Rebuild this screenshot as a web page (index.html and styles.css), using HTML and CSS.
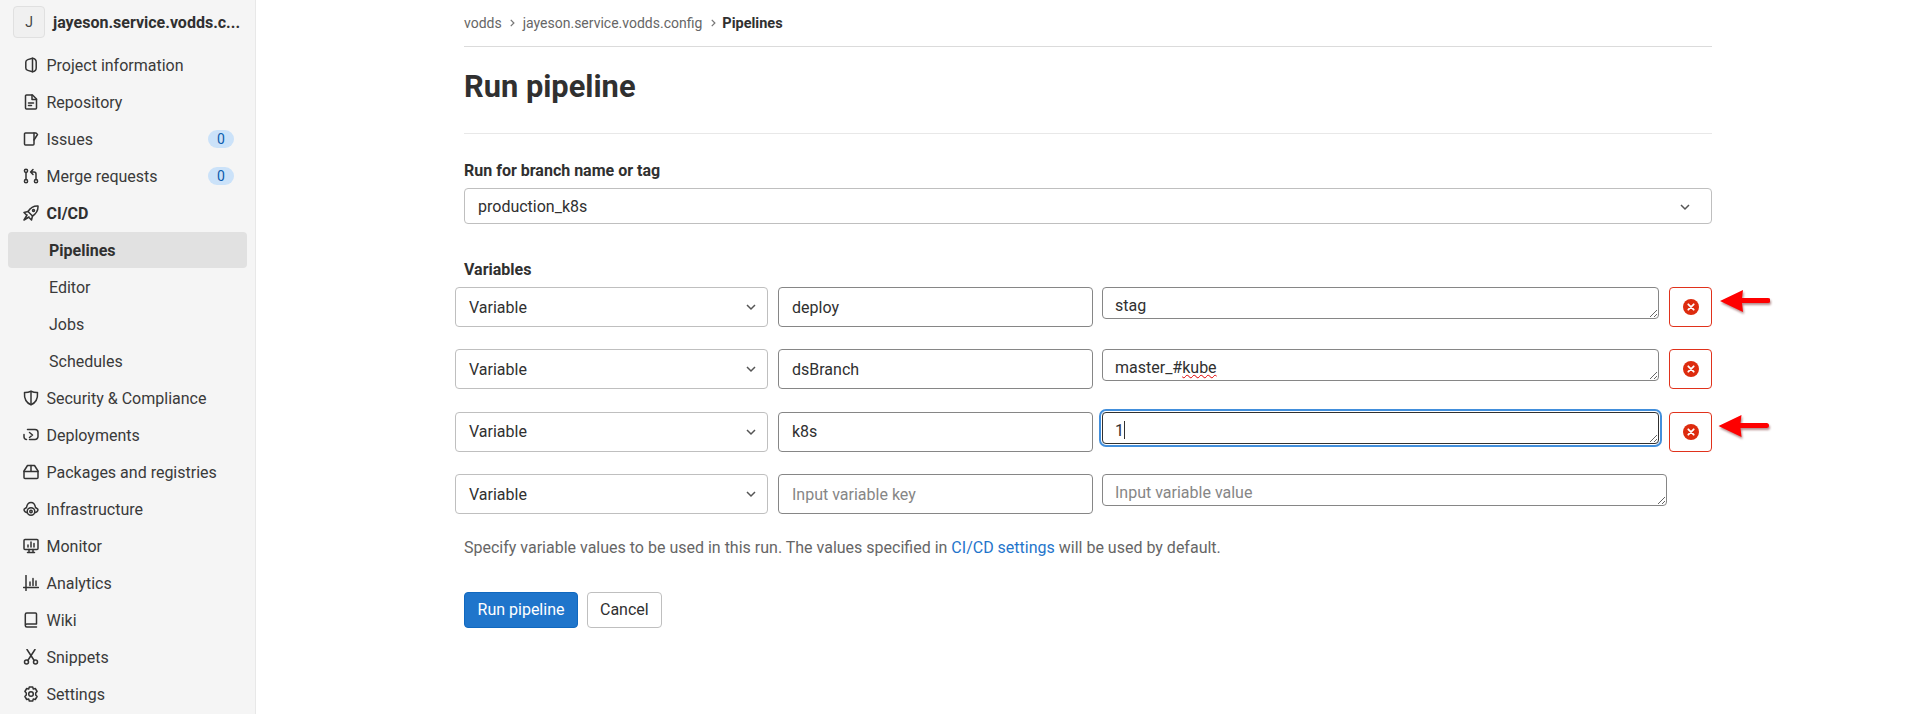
FILE: index.html
```html
<!DOCTYPE html>
<html lang="en">
<head>
  <meta charset="UTF-8" />
  <meta name="viewport" content="width=device-width, initial-scale=1.0" />
  <title>Run pipeline</title>
  <link rel="stylesheet" href="styles.css">
</head>
<body>
  <aside class="sidebar">
    <div class="context">
      <span class="avatar">J</span>
      <span class="context-name">jayeson.service.vodds.c...</span>
    </div>
    <ul class="nav">
      <li class="nav-item">
        <svg class="icon" viewBox="0 0 16 16"><path d="M9.5 1.2 4.8 2.6C3.4 3 2.800 3.800 2.800 5v6c0 1.200.6 2 2 2.400l4.700 1.400c2.200-.3 3.700-1.600 3.700-3.800V5c0-2.200-1.500-3.500-3.700-3.800z"/><path d="M9.500 1.200v13.600"/></svg>
        Project information
      </li>
      <li class="nav-item">
        <svg class="icon" viewBox="0 0 16 16"><path d="M9.500 1H3.500a1 1 0 0 0-1 1v12a1 1 0 0 0 1 1h9a1 1 0 0 0 1-1V5z"/><path d="M9 1v4.500h4.500M5.500 9h5M5.500 11.500h3"/></svg>
        Repository
      </li>
      <li class="nav-item">
        <svg class="icon" viewBox="0 0 16 16"><path d="M11 2H2.500a1 1 0 0 0-1 1v10a1 1 0 0 0 1 1H10a1 1 0 0 0 1-1V9l3.500-5.500L13 2z"/><path d="M11 2v7"/></svg>
        Issues
        <span class="badge">0</span>
      </li>
      <li class="nav-item">
        <svg class="icon" viewBox="0 0 16 16"><circle cx="3" cy="2.800" r="1.600"/><circle cx="3" cy="13.200" r="1.600"/><circle cx="13" cy="13.200" r="1.600"/><path d="M3 4.500v7M13 11.500V6a2 2 0 0 0-2-2H8M10 1.500 7.600 4 10 6.500"/></svg>
        Merge requests
        <span class="badge">0</span>
      </li>
      <li class="nav-item nav-open">
        <svg class="icon" viewBox="0 0 16 16"><path d="M15 1c-4.400-.3-7.400 1.500-10 5.500l4.500 4.500c4-2.600 5.800-5.600 5.500-10z"/><path d="M5 6.500 1 7.500l2 2M9.500 11l-1 4-2-2M4 10 1 15l5-3"/><circle cx="10.500" cy="5.500" r="1"/></svg>
        CI/CD
      </li>
      <li class="nav-sub nav-active">Pipelines</li>
      <li class="nav-sub">Editor</li>
      <li class="nav-sub">Jobs</li>
      <li class="nav-sub">Schedules</li>
      <li class="nav-item">
        <svg class="icon" viewBox="0 0 16 16"><path d="M8 1.200c2.200 1 4.300 1.400 6.500 1.300.4 5.500-1.400 10.200-6.500 12.300C2.900 12.700 1.100 8 1.500 2.500 3.700 2.600 5.800 2.200 8 1.200z"/><path d="M8 1.500v13"/></svg>
        Security &amp; Compliance
      </li>
      <li class="nav-item">
        <svg class="icon" viewBox="0 0 16 16"><path d="M4.500 2.500H12A3 3 0 0 1 15 5.500v4A3 3 0 0 1 12 12.500H6.500M3.500 12.500a2.500 2.500 0 0 1-2.500-2.500V7.500"/><path d="m6.500 5.500 3 2.500-3 2.500"/></svg>
        Deployments
      </li>
      <li class="nav-item">
        <svg class="icon" viewBox="0 0 16 16"><path d="M4.500 1.500h7L15 7v6.500a1 1 0 0 1-1 1H2a1 1 0 0 1-1-1V7z"/><path d="M1 7.500h14M8 1.500v6"/></svg>
        Packages and registries
      </li>
      <li class="nav-item">
        <svg class="icon" viewBox="0 0 16 16"><path d="M3.500 11.500C1.500 11 .5 9 1.500 7.800L3.500 6.500C4 3.500 6 1.500 8 1.500s4 2 4.500 5l2 1.300c1 1.200 0 3.200-2 3.700"/><circle cx="8" cy="10.500" r="3.800"/><circle cx="8" cy="10.500" r="1.200"/></svg>
        Infrastructure
      </li>
      <li class="nav-item">
        <svg class="icon" viewBox="0 0 16 16"><rect x="1" y="1.500" width="14" height="10" rx="1"/><path d="M4.500 14.500h7M6 11.500v3M10 11.500v3M5 9V7M8 9V4M11 9V5.500"/></svg>
        Monitor
      </li>
      <li class="nav-item">
        <svg class="icon" viewBox="0 0 16 16"><path d="M3 .5v15M.5 12.500h15M7 10.500V7M10 10.500V3.500M13 10.500V6"/></svg>
        Analytics
      </li>
      <li class="nav-item">
        <svg class="icon" viewBox="0 0 16 16"><path d="M3.800 1h8.700a1 1 0 0 1 1 1v10H3.800a1.500 1.500 0 0 0 0 3h9.700M2.300 13.500V2.500A1.500 1.500 0 0 1 3.800 1"/></svg>
        Wiki
      </li>
      <li class="nav-item">
        <svg class="icon" viewBox="0 0 16 16"><circle cx="3.500" cy="13" r="2"/><circle cx="12.500" cy="13" r="2"/><path d="M4.800 11.500 12 .5M11.200 11.500 4 .5"/></svg>
        Snippets
      </li>
      <li class="nav-item">
        <svg class="icon" viewBox="0 0 16 16"><path d="M6.300 1h3.400l.6 2 2-.5 1.800 3-1.400 1.500v2l1.400 1.500-1.800 3-2-.5-.6 2H6.300l-.6-2-2 .5-1.800-3L3.300 9V7L1.900 5.500l1.800-3 2 .5z"/><circle cx="8" cy="8" r="2.300"/></svg>
        Settings
      </li>
    </ul>
  </aside>

  <main class="content">
    <nav class="breadcrumbs">
      <span>vodds</span>
      <svg class="crumb-sep" viewBox="0 0 8 8"><path d="m3 1.500 2.500 2.500L3 6.500"/></svg>
      <span>jayeson.service.vodds.config</span>
      <svg class="crumb-sep" viewBox="0 0 8 8"><path d="m3 1.500 2.500 2.500L3 6.500"/></svg>
      <strong>Pipelines</strong>
    </nav>

    <h1 class="page-title">Run pipeline</h1>

    <form class="pipeline-form">
      <div class="field-label">Run for branch name or tag</div>
      <div class="select branch-select">
        production_k8s
        <svg class="chevron" viewBox="0 0 16 16"><path d="m4 6 4 4 4-4"/></svg>
      </div>

      <div class="field-label variables-label">Variables</div>

      <div class="var-row">
        <div class="select var-type">Variable <svg class="chevron" viewBox="0 0 16 16"><path d="m4 6 4 4 4-4"/></svg></div>
        <input class="var-key" type="text" value="deploy">
        <div class="var-value">stag</div>
        <button class="var-remove" type="button"><svg viewBox="0 0 16 16"><circle cx="8" cy="8" r="8"/><path d="m5.300 5.300 5.400 5.400m0-5.400-5.400 5.400"/></svg></button>
        <svg class="arrow" viewBox="0 0 50 22"><path d="M0 11 23 0l-1 8h26a2.500 2.500 0 0 1 0 5H22l1 9z"/></svg>
      </div>

      <div class="var-row">
        <div class="select var-type">Variable <svg class="chevron" viewBox="0 0 16 16"><path d="m4 6 4 4 4-4"/></svg></div>
        <input class="var-key" type="text" value="dsBranch">
        <div class="var-value">master_#<span class="misspelled">kube</span></div>
        <button class="var-remove" type="button"><svg viewBox="0 0 16 16"><circle cx="8" cy="8" r="8"/><path d="m5.300 5.300 5.400 5.400m0-5.400-5.400 5.400"/></svg></button>
      </div>

      <div class="var-row">
        <div class="select var-type">Variable <svg class="chevron" viewBox="0 0 16 16"><path d="m4 6 4 4 4-4"/></svg></div>
        <input class="var-key" type="text" value="k8s">
        <div class="var-value var-focus">1<span class="caret"></span></div>
        <button class="var-remove" type="button"><svg viewBox="0 0 16 16"><circle cx="8" cy="8" r="8"/><path d="m5.300 5.300 5.400 5.400m0-5.400-5.400 5.400"/></svg></button>
        <svg class="arrow arrow-long" viewBox="0 0 50 22"><path d="M0 11 23 0l-1 8h26a2.500 2.500 0 0 1 0 5H22l1 9z"/></svg>
      </div>

      <div class="var-row var-row-last">
        <div class="select var-type">Variable <svg class="chevron" viewBox="0 0 16 16"><path d="m4 6 4 4 4-4"/></svg></div>
        <input class="var-key" type="text" placeholder="Input variable key">
        <div class="var-value var-empty">Input variable value</div>
      </div>

      <p class="help-text">Specify variable values to be used in this run. The values specified in <a href="#">CI/CD settings</a> will be used by default.</p>

      <div class="actions">
        <button class="btn btn-primary" type="button">Run pipeline</button>
        <button class="btn" type="button">Cancel</button>
      </div>
    </form>
  </main>
</body>
</html>
```

FILE: styles.css
```css
* {
  box-sizing: border-box;
}
html, body {
  height: 100%;
}
body {
  margin: 0;
  display: flex;
  overflow: hidden;
  font-family: Roboto, "Noto Sans", sans-serif;
  font-size: 16px;
  background: #fff;
  color: #303030;
}

/* sidebar */
.sidebar {
  width: 256px;
  flex: none;
  background: #f5f5f5;
  border-right: 1px solid #e8e8e8;
}
.context {
  display: flex;
  align-items: center;
  gap: 8px;
  height: 32px;
  margin: 6px 0 9px 13px;
}
.avatar {
  display: flex;
  align-items: center;
  justify-content: center;
  width: 32px;
  height: 32px;
  flex: none;
  background: #f0f0f0;
  border: 1px solid #e0e0e0;
  border-radius: 4px;
  font-size: 14px;
  color: #444;
}
.context-name {
  font-weight: 700;
  white-space: nowrap;
}
.nav {
  list-style: none;
  margin: 0;
  padding: 0;
  color: #3a3a3a;
}
.nav-item, .nav-sub {
  display: flex;
  align-items: center;
  height: 36px;
  margin: 0 8px 1px;
  border-radius: 4px;
}
.nav-item {
  padding-left: 15px;
}
.nav-sub {
  padding-left: 41px;
}
.nav-open {
  font-weight: 700;
  color: #303030;
}
.nav-active {
  background: #e1e1e1;
  font-weight: 700;
  color: #303030;
}
.icon {
  width: 16px;
  height: 16px;
  flex: none;
  margin-right: 7.5px;
  fill: none;
  stroke: #333;
  stroke-width: 1.5;
  stroke-linejoin: round;
  stroke-linecap: round;
}
.badge {
  margin-left: auto;
  margin-right: 13px;
  width: 26px;
  height: 18px;
  line-height: 18px;
  border-radius: 9px;
  background: #cbe2f9;
  color: #0b5cad;
  font-size: 14px;
  text-align: center;
}

/* main column */
.content {
  flex: 1;
  display: flex;
  flex-direction: column;
  align-items: center;
}
.breadcrumbs, .page-title, .pipeline-form {
  width: 1248px;
}
.breadcrumbs {
  display: flex;
  align-items: center;
  gap: 4px;
  height: 47px;
  border-bottom: 1px solid #dbdbdb;
  font-size: 14px;
  color: #666;
}
.breadcrumbs strong {
  color: #303030;
  font-size: 14.5px;
  margin-left: -1px;
}
.crumb-sep {
  width: 10px;
  height: 10px;
  margin: 0 1.5px;
  fill: none;
  stroke: #777;
  stroke-width: 1;
}
.page-title {
  margin: 0;
  height: 87px;
  padding-top: 20px;
  border-bottom: 1px solid #e8e8e8;
  font-size: 30.8px;
  line-height: 40px;
  font-weight: 700;
}
.pipeline-form {
  padding-top: 27px;
}
.field-label {
  font-weight: 700;
  line-height: 20px;
  margin-bottom: 7px;
}
.select {
  display: flex;
  align-items: center;
  justify-content: space-between;
  background: #fff;
  border: 1px solid #bfbfbf;
  border-radius: 4px;
  padding: 0 8px 0 13px;
}
.branch-select {
  height: 36px;
  padding: 1px 18px 0 13px;
}
.chevron {
  width: 16px;
  height: 16px;
  fill: none;
  stroke: #555;
  stroke-width: 1.5;
}
.variables-label {
  margin: 36px 0 7px;
}

/* variable rows */
.var-row {
  position: relative;
  display: flex;
  align-items: flex-start;
  gap: 10px;
  height: 40px;
  margin: 0 0 22.4px -9px;
}
.var-row-last {
  margin-right: 45px;
}
.var-type {
  width: 313px;
  height: 40px;
  flex: none;
}
.var-key {
  width: 315px;
  height: 40px;
  flex: none;
  padding: 0 13px;
  border: 1px solid #868686;
  border-radius: 4px;
  font: inherit;
  color: #303030;
}
.var-key::placeholder {
  color: #868686;
}
.var-value {
  flex: 1;
  height: 32px;
  margin-left: -1px;
  padding: 8px 12px 2px;
  border: 1px solid #868686;
  border-radius: 4px;
  line-height: 20px;
  overflow: hidden;
  resize: vertical;
}
.var-empty {
  color: #868686;
}
.var-focus {
  border-color: #303030;
  box-shadow: 0 0 0 1px #fff, 0 0 0 3px #428fdc;
}
.misspelled {
  text-decoration: underline wavy #e00000 1px;
}
.caret {
  display: inline-block;
  width: 1px;
  height: 18px;
  vertical-align: -3px;
  background: #303030;
}
.var-remove {
  width: 43px;
  height: 40px;
  flex: none;
  display: flex;
  align-items: center;
  justify-content: center;
  padding: 0;
  background: #fff;
  border: 1px solid #e0321c;
  border-radius: 4px;
}
.var-remove svg {
  width: 16px;
  height: 16px;
}
.var-remove circle {
  fill: #dd2b0e;
}
.var-remove path {
  fill: none;
  stroke: #fff;
  stroke-width: 1.8;
  stroke-linecap: round;
}
.arrow {
  position: absolute;
  left: calc(100% + 8px);
  top: 3px;
  width: 50px;
  height: 22px;
  fill: #fe0000;
  filter: drop-shadow(1px 2px 1px rgba(90, 0, 0, 0.45));
}
.arrow-long {
  left: calc(100% + 5px);
  width: 53px;
}

/* footer */
.help-text {
  margin: 0;
  padding-top: 1px;
  line-height: 20px;
  color: #666;
}
.help-text a {
  color: #1f75cb;
  text-decoration: none;
}
.actions {
  display: flex;
  gap: 9px;
  margin-top: 34px;
}
.btn {
  height: 36px;
  padding: 0 12px;
  background: #fff;
  border: 1px solid #bfbfbf;
  border-radius: 4px;
  font: inherit;
  color: #303030;
  white-space: nowrap;
}
.btn-primary {
  width: 114px;
  padding: 0;
  background: #1f75cb;
  border-color: #1068bf;
  color: #fff;
}
```
